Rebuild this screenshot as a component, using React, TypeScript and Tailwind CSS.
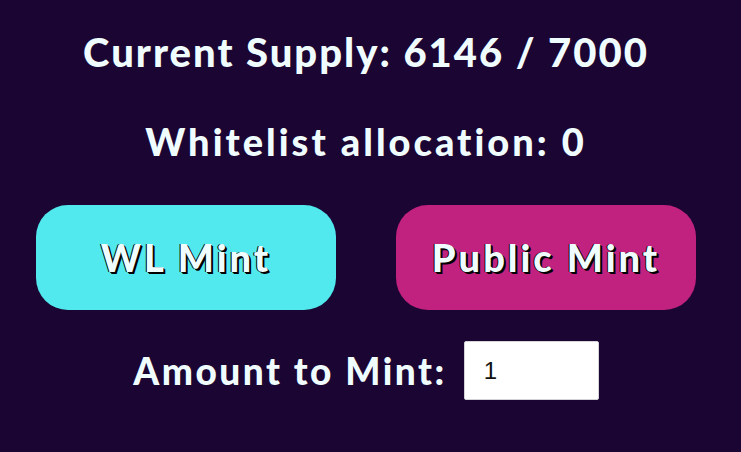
import React, { useState } from 'react';

const MintPanel: React.FC = () => {
  const [amount, setAmount] = useState('1');

  return (
    <div className="min-h-screen w-full bg-[#1b0533] font-['Lato',sans-serif] text-[#f0fdff] flex flex-col items-center pr-[9px]">
      <h1 className="mt-[28px] text-[40px] leading-[48px] font-black tracking-[2px]">
        Current Supply: 6146 / 7000
      </h1>

      <h2 className="mt-[42px] text-[38px] leading-[46px] font-black tracking-[3px]">
        Whitelist allocation: 0
      </h2>

      {/* mint buttons */}
      <div className="mt-[41px] flex gap-[60px]">
        <button className="w-[300px] h-[105px] rounded-[32px] bg-[#51e9ee] text-[38px] font-black tracking-[3px] text-[#f0fdff] [text-shadow:2px_2px_0_#000,1px_1px_0_#000,-1px_0_0_#000]">
          WL Mint
        </button>
        <button className="w-[300px] h-[105px] rounded-[32px] bg-[#c1217f] text-[38px] font-black tracking-[3px] text-[#f0fdff] [text-shadow:2px_2px_0_#000,1px_1px_0_#000,-1px_0_0_#000]">
          Public Mint
        </button>
      </div>

      <div className="mt-[31px] flex items-center gap-[17px]">
        <span className="text-[37px] font-black tracking-[2.5px]">Amount to Mint:</span>
        <input
          type="number"
          value={amount}
          onChange={(e) => setAmount(e.target.value)}
          className="w-[135px] h-[59px] rounded-[2px] bg-white border border-[#d4d4d8] pl-[19px] text-[24px] text-[#111] font-['Liberation_Sans',sans-serif] outline-none"
        />
      </div>
    </div>
  );
};

export default function App() {
  return <MintPanel />;
}
